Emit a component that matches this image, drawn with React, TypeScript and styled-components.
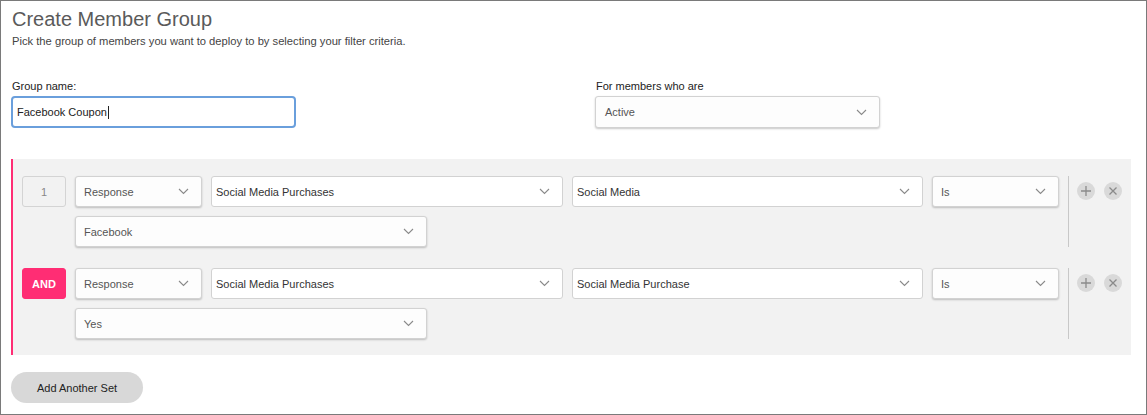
import React from "react";
import styled, { createGlobalStyle } from "styled-components";

const GlobalStyle = createGlobalStyle`
  html, body { margin: 0; padding: 0; background: #fff; }
  body { font-family: "Liberation Sans", Arial, Helvetica, sans-serif; }
  * { box-sizing: border-box; }
`;

const Frame = styled.div`
  width: 1147px;
  height: 415px;
  border: 1px solid #7a7a7a;
  padding: 5px 15px 0 10px;
  display: flex;
  flex-direction: column;
  overflow: hidden;
`;

const Title = styled.h1`
  margin: 0 0 0 1px;
  font-size: 20px;
  font-weight: 300;
  color: #5a5a5a;
  line-height: 26px;
`;

const Subtitle = styled.p`
  margin: 2px 0 0 1px;
  font-size: 11.2px;
  color: #444;
  line-height: 14px;
`;

const TopFields = styled.div`
  display: flex;
  margin-top: 31px;
  gap: 299px;
`;

const Field = styled.div`
  display: flex;
  flex-direction: column;
  width: 285px;
`;

const Label = styled.label`
  font-size: 11px;
  color: #222;
  line-height: 14px;
  margin-left: 1px;
  margin-bottom: 3px;
`;

const TextInput = styled.div`
  height: 32px;
  border: 2px solid #6a9fdc;
  border-radius: 4px;
  display: flex;
  align-items: center;
  padding-left: 4px;
  font-size: 11px;
  color: #222;
`;

const Caret = styled.span`
  display: inline-block;
  width: 1px;
  height: 13px;
  background: #222;
  margin-left: 1px;
`;

const SelectBox = styled.div<{ $w?: string; $flat?: boolean; $pad?: number; $h?: number }>`
  width: ${(p) => p.$w ?? "100%"};
  height: ${(p) => p.$h ?? 31}px;
  background: ${(p) => (p.$flat ? "#fff" : "#fdfdfd")};
  border: 1px solid #d2d2d2;
  border-radius: 3px;
  box-shadow: ${(p) => (p.$flat ? "none" : "0 1px 2px rgba(0,0,0,0.22)")};
  display: flex;
  align-items: center;
  justify-content: space-between;
  padding: 0 12px 0 ${(p) => p.$pad ?? 8}px;
  font-size: 11px;
  color: ${(p) => (p.$flat ? "#333" : "#555")};
  flex-shrink: 0;
`;

const Chevron = () => (
  <svg width="11" height="7" viewBox="0 0 11 7" fill="none">
    <path d="M1 1l4.5 4.5L10 1" stroke="#8a8a8a" strokeWidth="1.1" />
  </svg>
);

const Select = ({
  value,
  w,
  flat,
  pad,
  h,
}: {
  value: string;
  w?: string;
  flat?: boolean;
  pad?: number;
  h?: number;
}) => (
  <SelectBox $w={w} $flat={flat} $pad={pad} $h={h}>
    <span>{value}</span>
    <Chevron />
  </SelectBox>
);

const Panel = styled.div`
  margin-top: 31px;
  width: 1120px;
  background: #f2f2f2;
  border-left: 2px solid #ff2d74;
  padding: 17px 9px 16px 9px;
  display: flex;
  flex-direction: column;
  gap: 21px;
`;

const Condition = styled.div`
  display: flex;
  align-items: flex-start;
  gap: 9px;
`;

const Badge = styled.div<{ $and?: boolean }>`
  width: 44px;
  height: 31px;
  flex-shrink: 0;
  border-radius: 3px;
  display: flex;
  align-items: center;
  justify-content: center;
  font-size: 11px;
  font-weight: ${(p) => (p.$and ? 700 : 400)};
  color: ${(p) => (p.$and ? "#fff" : "#888")};
  background: ${(p) => (p.$and ? "#ff2d74" : "#f2f2f2")};
  border: 1px solid ${(p) => (p.$and ? "#ff2d74" : "#d4d4d4")};
`;

const Fields = styled.div`
  display: flex;
  flex-direction: column;
  gap: 9px;
  flex-shrink: 0;
`;

const FieldRow = styled.div`
  display: flex;
  gap: 9px;
`;

const Divider = styled.div`
  width: 1px;
  flex-shrink: 0;
  align-self: stretch;
  background: #c8c8c8;
`;

const Actions = styled.div`
  display: flex;
  gap: 9px;
  padding-top: 6px;
  margin-left: -1px;
  flex-shrink: 0;
`;

const RoundBtn = styled.div`
  width: 18px;
  height: 18px;
  border-radius: 50%;
  background: #d9d9d9;
  display: flex;
  align-items: center;
  justify-content: center;
`;

const PlusIcon = () => (
  <svg width="12" height="12" viewBox="0 0 12 12">
    <path d="M6 1v10M1 6h10" stroke="#8a8a8a" strokeWidth="1.3" />
  </svg>
);

const XIcon = () => (
  <svg width="10" height="10" viewBox="0 0 10 10">
    <path d="M1.5 1.5l7 7M8.5 1.5l-7 7" stroke="#8a8a8a" strokeWidth="1.3" />
  </svg>
);

const AddSet = styled.button`
  margin-top: 17px;
  width: 132px;
  height: 31px;
  border: none;
  border-radius: 16px;
  background: #d8d8d8;
  font-family: "Liberation Sans", Arial, sans-serif;
  font-size: 11px;
  color: #222;
  padding: 0;
`;

type Cond = {
  badge: string;
  and?: boolean;
  field: string;
  sub: string;
  op: string;
  value: string;
};

const conditions: Cond[] = [
  { badge: "1", field: "Social Media Purchases", sub: "Social Media", op: "Is", value: "Facebook" },
  { badge: "AND", and: true, field: "Social Media Purchases", sub: "Social Media Purchase", op: "Is", value: "Yes" },
];

export default function App() {
  return (
    <>
      <GlobalStyle />
      <Frame>
        <Title>Create Member Group</Title>
        <Subtitle>Pick the group of members you want to deploy to by selecting your filter criteria.</Subtitle>
        <TopFields>
          <Field>
            <Label>Group name:</Label>
            <TextInput>
              Facebook Coupon
              <Caret />
            </TextInput>
          </Field>
          <Field>
            <Label>For members who are</Label>
            <Select value="Active" w="285px" pad={9} h={32} />
          </Field>
        </TopFields>
        <Panel>
          {conditions.map((c, i) => (
            <Condition key={i}>
              <Badge $and={c.and}>{c.badge}</Badge>
              <Fields>
                <FieldRow>
                  <Select value="Response" w="127px" />
                  <Select value={c.field} w="352px" flat pad={4} />
                  <Select value={c.sub} w="351px" flat pad={4} />
                  <Select value={c.op} w="127px" />
                </FieldRow>
                <FieldRow>
                  <Select value={c.value} w="352px" />
                </FieldRow>
              </Fields>
              <Divider />
              <Actions>
                <RoundBtn>
                  <PlusIcon />
                </RoundBtn>
                <RoundBtn>
                  <XIcon />
                </RoundBtn>
              </Actions>
            </Condition>
          ))}
        </Panel>
        <AddSet>Add Another Set</AddSet>
      </Frame>
    </>
  );
}
